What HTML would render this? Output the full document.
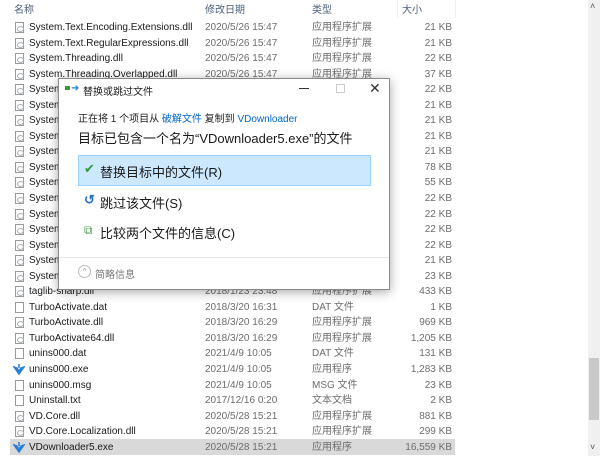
<!DOCTYPE html><html><head><meta charset="utf-8"><style>
*{margin:0;padding:0;box-sizing:border-box}
body{width:600px;height:456px;overflow:hidden;background:#fff;font-family:"Liberation Sans","Noto Sans CJK SC",sans-serif;font-size:10px;position:relative}
.a{position:absolute;white-space:nowrap}
.L{position:absolute;left:0;top:20px;width:588px}
.r{position:relative;height:15.55px;white-space:nowrap}
.r span{line-height:13px}
.ic{position:absolute;left:15px;top:2px;width:9px;height:11px;border:1px solid #9a9a9a;background:#fff}
.ic.d::after{content:"";position:absolute;left:1px;top:3px;width:5px;height:4px;border:1px solid #a8b0b8;border-radius:50%}
.n{position:absolute;left:29px;top:1px;color:#1a1a1a}
.t{position:absolute;left:205px;top:1px;color:#6d6d6d}
.y{position:absolute;left:312px;top:1px;color:#6d6d6d}
.s{position:absolute;right:136px;top:1px;color:#6d6d6d}
.ex{position:absolute;left:13px;top:2px}
</style></head><body>
<div class="a" style="left:14px;top:1px;color:#4c607a">名称</div>
<div class="a" style="left:205px;top:1px;color:#4c607a">修改日期</div>
<div class="a" style="left:312px;top:1px;color:#4c607a">类型</div>
<div class="a" style="left:402px;top:1px;color:#4c607a">大小</div>
<div class="a" style="left:397px;top:0;width:1px;height:18px;background:#eee"></div>
<div class="a" style="left:455px;top:0;width:1px;height:18px;background:#eee"></div>
<div class="a" style="left:588px;top:0;width:12px;height:456px;background:#f0f0f0"></div>
<div class="a" style="left:589px;top:358px;width:10px;height:62px;background:#c8c8c8"></div>
<div class="a" style="left:590px;top:1px;font-size:9px;color:#555">˄</div>
<div class="a" style="left:590px;top:442px;font-size:9px;color:#555">˅</div>
<div class="a" style="left:10px;top:439px;width:445px;height:16px;background:#d9d9d9"></div>
<div class="L">
<div class="r"><div class="ic d"></div><span class="n">System.Text.Encoding.Extensions.dll</span><span class="t">2020/5/26 15:47</span><span class="y">应用程序扩展</span><span class="s">21 KB</span></div>
<div class="r"><div class="ic d"></div><span class="n">System.Text.RegularExpressions.dll</span><span class="t">2020/5/26 15:47</span><span class="y">应用程序扩展</span><span class="s">21 KB</span></div>
<div class="r"><div class="ic d"></div><span class="n">System.Threading.dll</span><span class="t">2020/5/26 15:47</span><span class="y">应用程序扩展</span><span class="s">22 KB</span></div>
<div class="r"><div class="ic d"></div><span class="n">System.Threading.Overlapped.dll</span><span class="t">2020/5/26 15:47</span><span class="y">应用程序扩展</span><span class="s">37 KB</span></div>
<div class="r"><div class="ic d"></div><span class="n">System.Threading.Tasks.dll</span><span class="s">22 KB</span></div>
<div class="r"><div class="ic d"></div><span class="n">System.Threading.Tasks.dll</span><span class="s">21 KB</span></div>
<div class="r"><div class="ic d"></div><span class="n">System.Threading.Tasks.dll</span><span class="s">21 KB</span></div>
<div class="r"><div class="ic d"></div><span class="n">System.Threading.Tasks.dll</span><span class="s">21 KB</span></div>
<div class="r"><div class="ic d"></div><span class="n">System.Threading.Tasks.dll</span><span class="s">21 KB</span></div>
<div class="r"><div class="ic d"></div><span class="n">System.Threading.Tasks.dll</span><span class="s">78 KB</span></div>
<div class="r"><div class="ic d"></div><span class="n">System.Threading.Tasks.dll</span><span class="s">55 KB</span></div>
<div class="r"><div class="ic d"></div><span class="n">System.Threading.Tasks.dll</span><span class="s">22 KB</span></div>
<div class="r"><div class="ic d"></div><span class="n">System.Threading.Tasks.dll</span><span class="s">22 KB</span></div>
<div class="r"><div class="ic d"></div><span class="n">System.Threading.Tasks.dll</span><span class="s">22 KB</span></div>
<div class="r"><div class="ic d"></div><span class="n">System.Threading.Tasks.dll</span><span class="s">22 KB</span></div>
<div class="r"><div class="ic d"></div><span class="n">System.Threading.Tasks.dll</span><span class="s">21 KB</span></div>
<div class="r"><div class="ic d"></div><span class="n">System.Threading.Tasks.dll</span><span class="s">23 KB</span></div>
<div class="r"><div class="ic d"></div><span class="n">taglib-sharp.dll</span><span class="t">2018/1/23 23:48</span><span class="y">应用程序扩展</span><span class="s">433 KB</span></div>
<div class="r"><div class="ic"></div><span class="n">TurboActivate.dat</span><span class="t">2018/3/20 16:31</span><span class="y">DAT 文件</span><span class="s">1 KB</span></div>
<div class="r"><div class="ic d"></div><span class="n">TurboActivate.dll</span><span class="t">2018/3/20 16:29</span><span class="y">应用程序扩展</span><span class="s">969 KB</span></div>
<div class="r"><div class="ic d"></div><span class="n">TurboActivate64.dll</span><span class="t">2018/3/20 16:29</span><span class="y">应用程序扩展</span><span class="s">1,205 KB</span></div>
<div class="r"><div class="ic"></div><span class="n">unins000.dat</span><span class="t">2021/4/9 10:05</span><span class="y">DAT 文件</span><span class="s">131 KB</span></div>
<div class="r"><svg class="ex" width="12" height="11" viewBox="0 0 12 11"><path d="M6 0 L6 4 M1 3 L6 10 L11 3 L8 4 L6 7 L4 4 Z" fill="#2a7fd4" stroke="#2a7fd4" stroke-width="1.5"/></svg><span class="n">unins000.exe</span><span class="t">2021/4/9 10:05</span><span class="y">应用程序</span><span class="s">1,283 KB</span></div>
<div class="r"><div class="ic"></div><span class="n">unins000.msg</span><span class="t">2021/4/9 10:05</span><span class="y">MSG 文件</span><span class="s">23 KB</span></div>
<div class="r"><div class="ic"></div><span class="n">Uninstall.txt</span><span class="t">2017/12/16 0:20</span><span class="y">文本文档</span><span class="s">2 KB</span></div>
<div class="r"><div class="ic d"></div><span class="n">VD.Core.dll</span><span class="t">2020/5/28 15:21</span><span class="y">应用程序扩展</span><span class="s">881 KB</span></div>
<div class="r"><div class="ic d"></div><span class="n">VD.Core.Localization.dll</span><span class="t">2020/5/28 15:21</span><span class="y">应用程序扩展</span><span class="s">299 KB</span></div>
<div class="r"><svg class="ex" width="12" height="11" viewBox="0 0 12 11"><path d="M6 0 L6 4 M1 3 L6 10 L11 3 L8 4 L6 7 L4 4 Z" fill="#2a7fd4" stroke="#2a7fd4" stroke-width="1.5"/></svg><span class="n">VDownloader5.exe</span><span class="t">2020/5/28 15:21</span><span class="y">应用程序</span><span class="s">16,559 KB</span></div>
</div>
<div class="a" style="left:58px;top:78px;width:332px;height:212px;background:#fff;border:1px solid #8a8a8a;box-shadow:0 2px 10px rgba(0,0,0,.35)">
<div class="a" style="left:6px;top:7px;width:5px;height:4px;background:#3a9a3a"></div>
<div class="a" style="left:12px;top:4px;color:#2a7fd4;font-size:10px">➜</div>
<div class="a" style="left:24px;top:4px;color:#222">替换或跳过文件</div>
<div class="a" style="left:240px;top:9px;width:10px;height:1px;background:#333"></div>
<div class="a" style="left:277px;top:5px;width:9px;height:9px;border:1px solid #ccc"></div>
<div class="a" style="left:310px;top:1px;font-size:14px;color:#333">✕</div>
<div class="a" style="left:19px;top:31px;color:#222">正在将 1 个项目从 <span style="color:#0066cc">破解文件</span> 复制到 <span style="color:#0066cc">VDownloader</span></div>
<div class="a" style="left:19px;top:49px;font-size:13px;color:#1a1a1a">目标已包含一个名为“VDownloader5.exe”的文件</div>
<div class="a" style="left:19px;top:76px;width:293px;height:31px;background:#cce8ff;border:1px solid #99d1ff"></div>
<div class="a" style="left:25px;top:82px;font-size:13px;color:#2a9a3a">✔</div>
<div class="a" style="left:41px;top:83px;font-size:13px;color:#1a1a1a">替换目标中的文件(R)</div>
<div class="a" style="left:25px;top:113px;font-size:13px;color:#2a6fc4;font-weight:bold">↺</div>
<div class="a" style="left:41px;top:114px;font-size:13px;color:#1a1a1a">跳过该文件(S)</div>
<div class="a" style="left:25px;top:144px;font-size:12px;color:#4a9a4a">⧉</div>
<div class="a" style="left:41px;top:144px;font-size:13px;color:#1a1a1a">比较两个文件的信息(C)</div>
<div class="a" style="left:0;top:178px;width:330px;height:1px;background:#e8e8e8"></div>
<div class="a" style="left:19px;top:186px;width:13px;height:13px;border:1px solid #bbb;border-radius:50%;font-size:8px;color:#999;text-align:center;line-height:12px">^</div>
<div class="a" style="left:36px;top:187px;color:#777">简略信息</div>
</div>
</body></html>
